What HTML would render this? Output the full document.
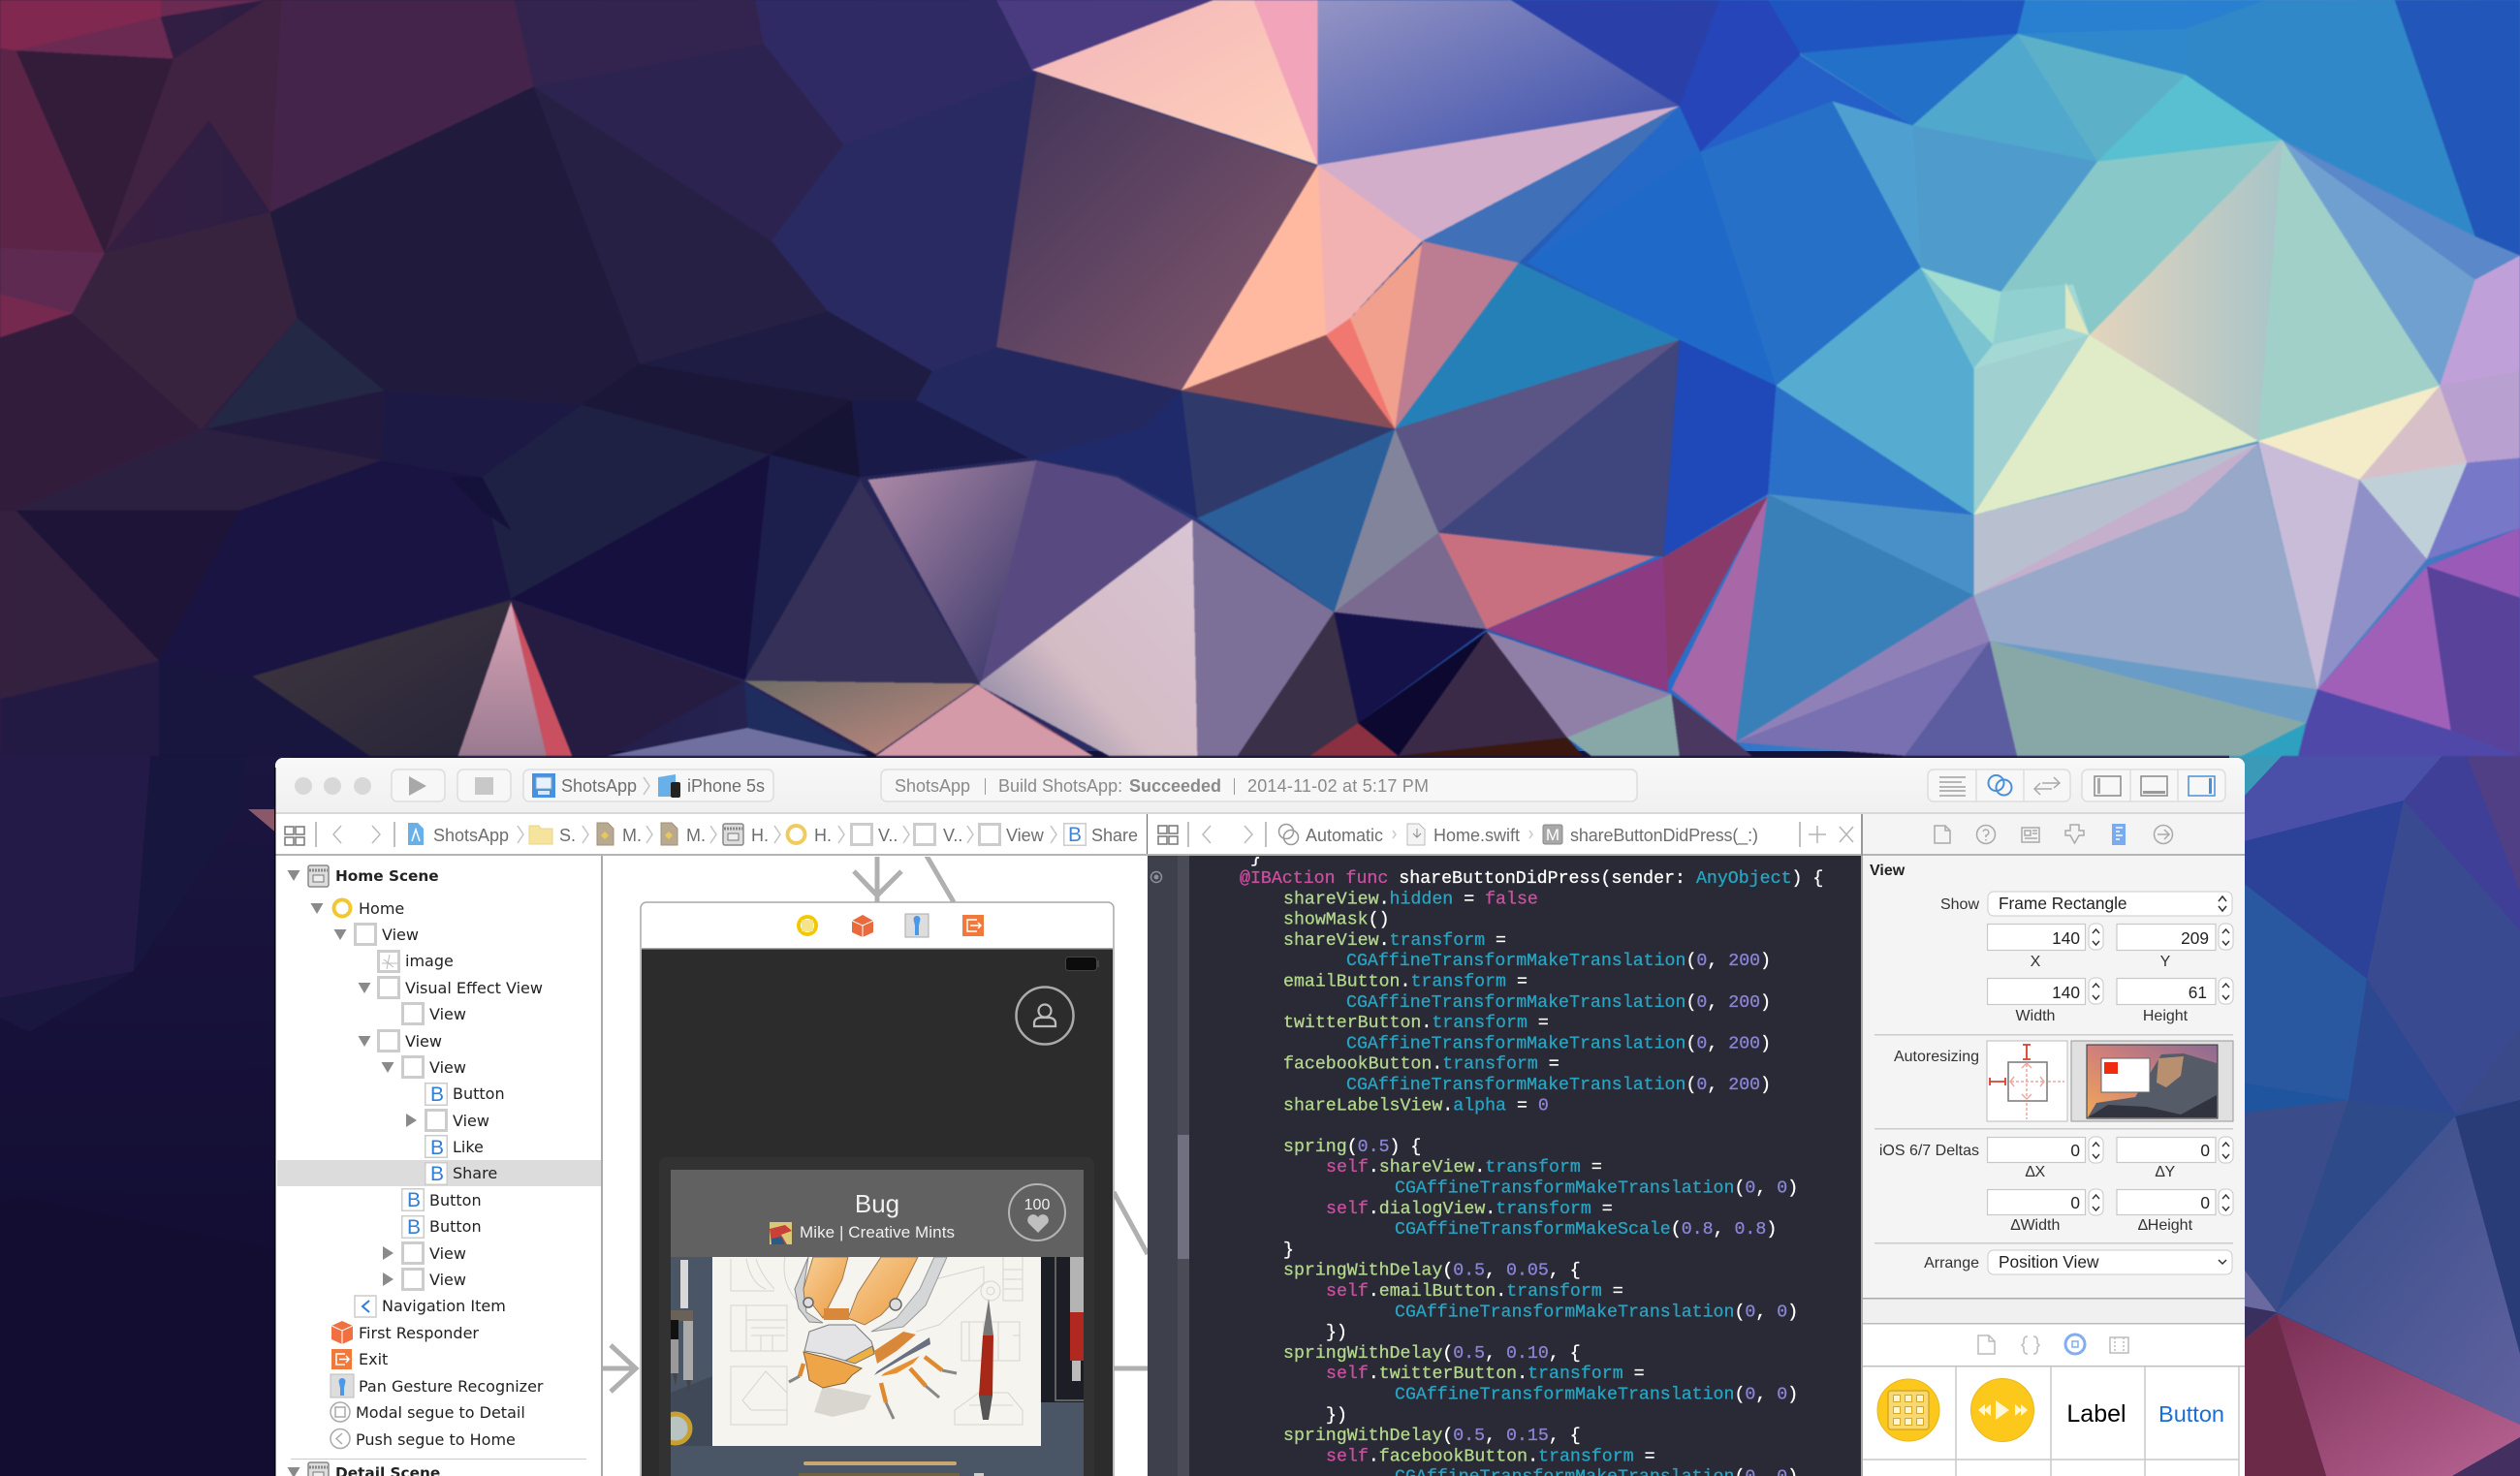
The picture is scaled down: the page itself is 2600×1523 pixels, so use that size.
<!DOCTYPE html>
<html><head><meta charset="utf-8"><title>Xcode ShotsApp</title>
<style>
html,body{margin:0;padding:0;width:2600px;height:1523px;overflow:hidden;background:#15123a}
svg{display:block}
text{font-family:"Liberation Sans",sans-serif;white-space:pre}
.o{font-family:"DejaVu Sans",sans-serif;font-size:16px;fill:#222}
.ob{font-family:"DejaVu Sans",sans-serif;font-size:15.3px;font-weight:bold;fill:#222}
.tb{font-size:18px;fill:#6e6e6e}
.ac{font-size:18px;fill:#8a8a8a}
.i{font-size:16px;fill:#333}
.f{font-size:17.3px;fill:#222}
.r{text-anchor:end}.c{text-anchor:middle}
.code text{font-family:"Liberation Mono",monospace;font-size:18.25px;fill:#fff;stroke:#fff;stroke-width:.3px}
.g{fill:#b2d68c;stroke:#b2d68c}.t{fill:#27a4c2;stroke:#27a4c2}.p{fill:#c8509f;stroke:#c8509f}.n{fill:#8a84d4;stroke:#8a84d4}
</style></head><body>
<svg xmlns="http://www.w3.org/2000/svg" width="2600" height="1523" viewBox="0 0 2600 1523">
<defs>
<filter id="soft" x="-1%" y="-1%" width="102%" height="102%" color-interpolation-filters="sRGB"><feGaussianBlur stdDeviation="0.8"/></filter>
<linearGradient id="base" x1="0" x2="1" y1="0" y2="0"><stop offset="0" stop-color="#3a1f42"/><stop offset=".2" stop-color="#221c44"/><stop offset=".42" stop-color="#2a2a60"/><stop offset=".65" stop-color="#2468c8"/><stop offset=".85" stop-color="#60a8c8"/><stop offset="1" stop-color="#3a6ac0"/></linearGradient>
<linearGradient id="brown" x1="0" x2="1" y1="0" y2="1"><stop offset="0" stop-color="#3f3358"/><stop offset="1" stop-color="#875a6e"/></linearGradient>
<linearGradient id="blueg" x1="0" x2="1" y1="0" y2="1"><stop offset="0" stop-color="#9494c4"/><stop offset="1" stop-color="#3248a8"/></linearGradient>
<linearGradient id="peach" x1="0" x2="1" y1="0" y2="1"><stop offset="0" stop-color="#f2b6ba"/><stop offset="1" stop-color="#ffd0ba"/></linearGradient>
<linearGradient id="cream" x1="0" x2="1" y1="0" y2="0"><stop offset="0" stop-color="#e4d4bc"/><stop offset="1" stop-color="#a8c4c8"/></linearGradient>
<linearGradient id="lav" x1="0" x2="1" y1="0" y2="1"><stop offset="0" stop-color="#b08ca8"/><stop offset="1" stop-color="#2f3066"/></linearGradient>
<linearGradient id="pw" x1="1" x2="0" y1="0" y2="1"><stop offset="0" stop-color="#d8c4d4"/><stop offset=".6" stop-color="#d4bcc4"/><stop offset="1" stop-color="#7a7a9c"/></linearGradient>
<linearGradient id="pinkr" x1="0" x2="1" y1="0" y2="1"><stop offset="0" stop-color="#7a2f55"/><stop offset="1" stop-color="#b86494"/></linearGradient>
<linearGradient id="rightb" x1="0" x2="1" y1="0" y2="1"><stop offset="0" stop-color="#2f4a88"/><stop offset="1" stop-color="#60629e"/></linearGradient>
<linearGradient id="lnavy" x1="0" x2="0" y1="0" y2="1"><stop offset="0" stop-color="#1b1640"/><stop offset="1" stop-color="#100a2e"/></linearGradient>
<linearGradient id="tbar" x1="0" x2="0" y1="0" y2="1"><stop offset="0" stop-color="#f8f8f8"/><stop offset="1" stop-color="#f0f0f0"/></linearGradient>
<linearGradient id="sky" x1="0" x2="1" y1="1" y2="0"><stop offset="0" stop-color="#f0a858"/><stop offset=".5" stop-color="#d0807a"/><stop offset="1" stop-color="#8a6a94"/></linearGradient>
<linearGradient id="thigh" x1="0" x2="1" y1="0" y2="1"><stop offset="0" stop-color="#f8d098"/><stop offset="1" stop-color="#ea9a40"/></linearGradient>
<linearGradient id="pk" x1="0" x2="0" y1="0" y2="1"><stop offset="0" stop-color="#d8a4b6"/><stop offset="1" stop-color="#9a7a90"/></linearGradient>
<linearGradient id="gy" x1="0" x2="1" y1="0" y2="1"><stop offset="0" stop-color="#40363f"/><stop offset="1" stop-color="#262438"/></linearGradient>
<linearGradient id="tan" x1="0" x2="1" y1="0" y2="1"><stop offset="0" stop-color="#6e6c66"/><stop offset="1" stop-color="#c48a80"/></linearGradient>
<clipPath id="win"><path d="M284 1523V790a8 8 0 0 1 8-8H2308a8 8 0 0 1 8 8V1523Z"/></clipPath>
<clipPath id="ed"><rect x="1184" y="884" width="738" height="639"/></clipPath>
<clipPath id="cv"><rect x="622" y="884" width="562" height="639"/></clipPath>
<clipPath id="img"><rect x="692" y="1297" width="426" height="226"/></clipPath>
<g id="box"><rect x="1.5" y="1.5" width="21" height="21" fill="#fff" stroke="#ccc" stroke-width="3"/></g>
<g id="bb"><rect x=".75" y=".75" width="22.5" height="22.5" fill="#fff" stroke="#ccc" stroke-width="1.5"/></g>
<path id="td" d="M-6.5-5H6.5L0 6Z" fill="#8a8a8a"/>
<path id="tr" d="M-5-7L6 0L-5 7Z" fill="#8a8a8a"/>
<path id="ch" d="M0-9L6 0L0 9" fill="none" stroke="#c4c4c4" stroke-width="1.5"/>
<g id="grid" fill="none" stroke="#777" stroke-width="1.5"><rect x="0" y="0" width="9" height="8"/><rect x="11" y="0" width="9" height="8"/><rect x="0" y="11" width="9" height="8"/><rect x="11" y="11" width="9" height="8"/></g>
<g id="dm"><path d="M0 0H11L17 6V23H0Z" fill="#b8aa90" stroke="#a09078"/><path d="M8 9L12 13L8 17L4 13Z" fill="#e8c858"/></g>
<g id="sb"><rect x="0" y="0" width="21" height="22" rx="2" fill="#ddd" stroke="#888" stroke-width="1.5"/><path d="M1 5H20" stroke="#888" stroke-width="3" stroke-dasharray="2 1"/><rect x="5" y="10" width="11" height="7" fill="#eee" stroke="#777"/></g>
<g id="sp" fill="#fff" stroke="#c8c8c8" stroke-width="1"><rect x="0" y="0" width="15" height="27" rx="6"/><path d="M4 10L7.5 6L11 10M4 18L7.5 22L11 18" fill="none" stroke="#333" stroke-width="1.4"/></g>
</defs>

<!-- WALLPAPER LOWER LEFT -->
<rect x="0" y="760" width="300" height="763" fill="url(#lnavy)"/>
<polygon points="0,760 157,760 138,1002 0,1030" fill="#241a48"/>
<polygon points="157,760 255,760 250,835 138,1002" fill="#17163f"/>
<polygon points="0,1030 138,1002 30,1065 0,1050" fill="#19173f"/>
<polygon points="0,1240 20,1235 284,1290 284,1523 0,1523" fill="#130d31"/>
<polygon points="256,835 300,835 300,872" fill="#8a5868"/>

<!-- WALLPAPER LOWER RIGHT -->
<rect x="2300" y="760" width="300" height="763" fill="#2f4a90"/>
<polygon points="2300,838 2373,760 2300,760" fill="#3a9ab8"/>
<polygon points="2300,872 2480,826 2537,760 2373,760 2300,838" fill="#4a4fa8"/>
<polygon points="2537,760 2600,920 2600,760" fill="#503f85"/>
<polygon points="2480,826 2537,760 2600,920 2600,965" fill="#3f3f98"/>
<polygon points="2300,872 2480,826 2442,1010 2300,900" fill="#2c4298"/>
<polygon points="2480,826 2600,960 2600,1060 2533,1149 2442,1010" fill="#3a4a90"/>
<polygon points="2442,1010 2533,1149 2423,1135" fill="#2c4890"/>
<polygon points="2300,900 2442,1010 2423,1135 2300,1150" fill="#2a58a0"/>
<polygon points="2300,1115 2423,1135 2300,1150" fill="#1f559f"/>
<polygon points="2300,1150 2423,1135 2349,1354 2300,1290" fill="#3a4c8a"/>
<polygon points="2423,1135 2533,1149 2349,1354" fill="#2e4a88"/>
<polygon points="2533,1152 2600,1135 2600,1397" fill="#2a3c78"/>
<polygon points="2533,1152 2600,1397 2600,1470 2349,1354" fill="url(#rightb)"/>
<polygon points="2533,1149 2600,1060 2600,1135" fill="#3a4a88"/>
<polygon points="2300,1290 2349,1354 2300,1345" fill="#6a6aa0"/>
<polygon points="2300,1345 2349,1354 2300,1395" fill="#3a3060"/>
<polygon points="2349,1355 2600,1470 2600,1483 2530,1523 2400,1523" fill="url(#pinkr)"/>
<polygon points="2349,1355 2400,1523 2300,1523 2300,1395" fill="#6a2a48"/>
<polygon points="2600,1483 2530,1523 2600,1523" fill="#443060"/>

<!-- WALLPAPER TOP -->
<rect width="2600" height="775" fill="url(#base)"/>
<g filter="url(#soft)"><g transform="scale(1.6582 .4974)" shape-rendering="crispEdges">
<polygon points="0,0 165,0 100,35 108,122 10,105 0,100" fill="#6a2a52"/>
<polygon points="0,0 100,0 100,35 10,105 0,100" fill="#80284f"/>
<polygon points="0,100 10,105 65,525 0,515" fill="#5c2548"/>
<polygon points="10,105 108,122 130,250 65,525" fill="#321c3a"/>
<polygon points="108,122 165,0 175,0 168,440 130,250 65,525" fill="#402242"/>
<polygon points="175,0 320,0 332,180 168,440" fill="#44244a"/>
<polygon points="320,0 470,0 475,90 332,180" fill="#33244f"/>
<polygon points="0,515 65,525 45,650 0,700" fill="#5e2a52"/>
<polygon points="0,610 45,650 0,700" fill="#76294f"/>
<polygon points="65,525 168,440 185,660 125,890 45,650" fill="#38233f"/>
<polygon points="0,700 45,650 125,890 10,1059 0,1060" fill="#321c3c"/>
<polygon points="168,440 332,180 398,755 362,840 239,810 185,660" fill="#201a3c"/>
<polygon points="332,180 475,90 525,300 480,500" fill="#2c2350"/>
<polygon points="332,180 480,500 515,645 398,755" fill="#272045"/>
<polygon points="185,660 239,810 128,890" fill="#232844"/>
<polygon points="128,890 239,810 237,955" fill="#221a3e"/>
<polygon points="239,810 362,840 300,990 237,955" fill="#1c1a45"/>
<polygon points="362,840 398,755 530,830 479,943" fill="#1a1738"/>
<polygon points="362,840 479,943 318,1242 300,990" fill="#1e2044"/>
<polygon points="479,943 464,1411 318,1242" fill="#15103e"/>
<polygon points="479,943 535,990 464,1411" fill="#1c1e4c"/>
<polygon points="10,1059 128,890 237,955 149,1059" fill="#2c2040"/>
<polygon points="237,955 300,990 318,1242 157,1403 99,1371 149,1059" fill="#191442"/>
<polygon points="280,990 300,990 318,1100 300,1060" fill="#14113a"/>
<polygon points="0,1060 10,1059 99,1371 0,1450" fill="#34203f"/>
<polygon points="10,1059 149,1059 99,1371" fill="#1e1438"/>
<polygon points="0,1450 99,1371 99,1568 0,1568" fill="#231a44"/>
<polygon points="99,1371 157,1403 230,1568 99,1568" fill="#18153f"/>
<polygon points="318,1245 157,1403 230,1568 285,1568" fill="url(#gy)"/>
<polygon points="318,1248 285,1568 345,1568" fill="url(#pk)"/>
<polygon points="318,1250 356,1568 340,1568" fill="#c85060"/>
<polygon points="318,1245 462,1415 378,1568 356,1568" fill="#261c42"/>
<polygon points="470,0 620,0 645,150 525,300 475,90" fill="#2f2a63"/>
<polygon points="620,0 755,0 642,145" fill="#4a3a80"/>
<polygon points="525,300 645,150 620,720 580,770 515,645 480,500" fill="#2a2a62"/>
<polygon points="645,150 820,345 735,810 620,720" fill="url(#brown)"/>
<polygon points="620,720 735,810 710,890 695,985 640,950 570,830 580,770" fill="#23285f"/>
<polygon points="515,645 580,770 570,830 530,830 398,755" fill="#1e1c42"/>
<polygon points="530,830 570,830 640,950 535,990" fill="#1a1a48"/>
<polygon points="479,943 530,830 535,990" fill="#161434"/>
<polygon points="640,950 695,985 745,1075 735,810 710,890" fill="#1f2a6a"/>
<polygon points="735,810 868,890 745,1075" fill="#2f3a6a"/>
<polygon points="642,145 755,0 780,0 820,342" fill="url(#peach)"/>
<polygon points="780,0 820,0 820,342" fill="#f2a4ba"/>
<polygon points="820,0 940,0 1045,220 820,342" fill="url(#blueg)"/>
<polygon points="940,0 1070,0 1058,315 1045,220" fill="#2a40a8"/>
<polygon points="820,342 1045,220 885,500" fill="#d2aecb"/>
<polygon points="820,342 885,500 840,660 825,695" fill="#f2b2b2"/>
<polygon points="820,342 825,695 735,810" fill="#feb9a0"/>
<polygon points="825,695 735,810 868,890" fill="#884e58"/>
<polygon points="825,695 840,660 885,505 868,890" fill="#f0a08c"/>
<polygon points="825,695 840,660 868,890" fill="#f07870"/>
<polygon points="885,500 945,545 868,890" fill="#bc7c92"/>
<polygon points="945,545 1045,705 868,890" fill="#2680b8"/>
<polygon points="885,500 1045,220 945,545" fill="#4070b8"/>
<polygon points="868,890 1045,705 895,1105" fill="#5a5585"/>
<polygon points="1045,705 1035,1155 895,1105" fill="#3f457d"/>
<polygon points="868,890 895,1105 830,1270" fill="#82849c"/>
<polygon points="868,890 745,1075 830,1270" fill="#2a5f9a"/>
<polygon points="895,1105 1030,1155 925,1305" fill="#c87080"/>
<polygon points="830,1270 895,1105 925,1305" fill="#7a6a90"/>
<polygon points="1045,220 1058,315 950,545" fill="#2468c8"/>
<polygon points="950,545 1058,315 1105,800 1045,705" fill="#1f6ac8"/>
<polygon points="1070,0 1120,0 1120,115 1058,315 1045,220" fill="#2545b8"/>
<polygon points="1100,0 1260,0 1255,70 1120,110" fill="#1f55c0"/>
<polygon points="1120,110 1255,70 1190,260" fill="#2270c8"/>
<polygon points="1120,115 1190,260 1140,210 1058,315" fill="#2460c8"/>
<polygon points="1058,315 1140,210 1195,470 1195,555 1105,800" fill="#2670c8"/>
<polygon points="1140,210 1190,260 1195,555" fill="#4fa0d0"/>
<polygon points="1195,555 1105,800 1228,1068 1228,760" fill="#55acd0"/>
<polygon points="1105,800 1228,1068 1100,1025" fill="#2a6fc8"/>
<polygon points="1045,705 1105,800 1100,1025 1035,1155" fill="#1f48b8"/>
<polygon points="1255,70 1190,260 1305,335" fill="#50a8cc"/>
<polygon points="1255,70 1360,155 1305,335" fill="#5cb0c8"/>
<polygon points="1255,70 1360,60 1360,155" fill="#2f88cc"/>
<polygon points="1260,0 1410,0 1360,60 1255,70" fill="#2a80d0"/>
<polygon points="1360,60 1410,0 1490,0 1540,490 1420,290 1360,155" fill="#3088c8"/>
<polygon points="1490,0 1568,0 1568,530 1540,490" fill="#2256b8"/>
<polygon points="1360,155 1420,290 1305,335" fill="#58c0d0"/>
<polygon points="1190,260 1305,335 1245,605 1195,555" fill="#4f9ccc"/>
<polygon points="1305,335 1420,290 1300,695 1290,590 1245,605" fill="#88c8c8"/>
<polygon points="1420,290 1300,695 1405,915" fill="url(#cream)"/>
<polygon points="1420,290 1405,915 1518,800" fill="#a0d0c8"/>
<polygon points="1420,290 1540,580 1518,800" fill="#70a0d0"/>
<polygon points="1540,490 1420,290 1540,580 1568,530" fill="#5a88c8"/>
<polygon points="1245,605 1290,590 1300,695 1228,765 1240,715" fill="#a4d8d4"/>
<polygon points="1195,555 1245,605 1240,715" fill="#a0dcd0"/>
<polygon points="1245,605 1285,590 1285,680 1240,715" fill="#90d0d0"/>
<polygon points="1285,585 1300,695 1285,680" fill="#e0e8c0"/>
<polygon points="1195,555 1240,715 1228,765" fill="#7cc4d0"/>
<polygon points="1228,765 1300,695 1228,1068" fill="#a0d0d0"/>
<polygon points="1300,695 1405,915 1228,1068" fill="#e0ecc8"/>
<polygon points="1405,915 1518,800 1468,995" fill="#f4ecc8"/>
<polygon points="1518,800 1535,960 1468,995" fill="#d8c0c8"/>
<polygon points="1518,800 1568,770 1568,950 1535,960" fill="#b8a0d0"/>
<polygon points="1540,580 1568,530 1568,770 1518,800" fill="#c0a0d8"/>
<polygon points="1405,920 1228,1068 1228,1235 1360,1060" fill="#b8c0d0"/>
<polygon points="1405,920 1228,1235 1238,1330 1442,1430" fill="#98a8c8"/>
<polygon points="1405,920 1360,1060 1228,1235" fill="#c4b0cc"/>
<polygon points="1405,915 1468,995 1442,1430" fill="#c8bcd8"/>
<polygon points="1468,995 1535,960 1510,1160" fill="#c0d0d8"/>
<polygon points="1468,995 1510,1160 1442,1430" fill="#9090c8"/>
<polygon points="1535,960 1568,950 1568,1095 1510,1160" fill="#7878c8"/>
<polygon points="1568,1095 1510,1175 1568,1240" fill="#9a5ab8"/>
<polygon points="1510,1175 1568,1240 1568,1568 1525,1515" fill="#58429a"/>
<polygon points="1510,1175 1525,1515 1442,1430" fill="#a060b8"/>
<polygon points="1238,1330 1442,1430 1435,1500" fill="#6a9cc8"/>
<polygon points="1238,1330 1435,1500 1395,1568 1255,1568" fill="#88a8a8"/>
<polygon points="1238,1330 1255,1568 1185,1568" fill="#5c5ca0"/>
<polygon points="1238,1330 1185,1568 1080,1540" fill="#7870b0"/>
<polygon points="1228,1235 1238,1330 1080,1540" fill="#9080b8"/>
<polygon points="1228,1068 1100,1025 1228,1235" fill="#4a90c8"/>
<polygon points="1100,1025 1228,1235 1080,1540" fill="#3a80b8"/>
<polygon points="1100,1025 1040,1430 1080,1540" fill="#a868a8"/>
<polygon points="1100,1030 1035,1155 1035,1430" fill="#8a3a68"/>
<polygon points="925,1305 1035,1155 1038,1435" fill="#8c3a82"/>
<polygon points="1040,1440 1080,1540 1090,1568 1045,1568" fill="#4a3860"/>
<polygon points="925,1310 1040,1440 975,1530" fill="#9080a8"/>
<polygon points="1040,1440 975,1530 990,1568 1045,1568" fill="#88a8a8"/>
<polygon points="1435,1500 1395,1568 1430,1568" fill="#2ea0c0"/>
<polygon points="1442,1430 1525,1515 1568,1568 1430,1568 1435,1500" fill="#5048a8"/>
<polygon points="540,995 645,955 610,1420" fill="url(#lav)"/>
<polygon points="645,955 695,990 742,1078 610,1420" fill="#584a80"/>
<polygon points="742,1078 608,1420 690,1568 745,1568" fill="url(#pw)"/>
<polygon points="742,1078 830,1270 770,1568 745,1568" fill="#7d7098"/>
<polygon points="830,1270 925,1305 845,1500" fill="#15124a"/>
<polygon points="830,1270 845,1500 815,1568 770,1568" fill="#3a3048"/>
<polygon points="925,1310 975,1530 870,1568" fill="#3a2a48"/>
<polygon points="925,1310 845,1500 870,1568" fill="#0c0830"/>
<polygon points="845,1500 815,1568 870,1568" fill="#8a3040"/>
<polygon points="870,1568 975,1530 985,1568" fill="#3a1810"/>
<polygon points="535,995 610,1420 463,1412" fill="#343058"/>
<polygon points="463,1412 608,1418 545,1565" fill="url(#tan)"/>
<polygon points="608,1420 545,1568 680,1568" fill="#d49aa8"/>
<polygon points="610,1425 680,1568 650,1510" fill="#a85868"/>
<polygon points="463,1415 540,1568 465,1510" fill="#1f2c5e"/>
<polygon points="465,1510 378,1568 540,1568" fill="#7070a0"/>
</g></g>

<!-- WINDOW -->
<g clip-path="url(#win)">
<rect x="284" y="782" width="2032" height="741" fill="#f4f4f4"/>
<rect x="284" y="782" width="2032" height="56" fill="url(#tbar)"/>
<rect x="284" y="838" width="2032" height="2" fill="#d8d8d8"/>
<rect x="284" y="840" width="1638" height="41" fill="#fff"/>
<rect x="284" y="881" width="2032" height="2" fill="#b4b4b4"/>
<rect x="284" y="883" width="338" height="640" fill="#fff"/>

<!-- traffic lights -->
<circle cx="313" cy="811" r="9" fill="#d8d8d8"/><circle cx="343" cy="811" r="9" fill="#d8d8d8"/><circle cx="374" cy="811" r="9" fill="#d8d8d8"/>
<g fill="#f7f7f7" stroke="#ddd" stroke-width="1.5">
<rect x="404" y="794" width="55" height="33" rx="6"/><rect x="472" y="794" width="55" height="33" rx="6"/><rect x="540" y="794" width="258" height="33" rx="6"/><rect x="909" y="794" width="780" height="33" rx="6"/>
<rect x="1989" y="794" width="147" height="33" rx="6"/><rect x="2148" y="794" width="148" height="33" rx="6"/>
</g>
<path d="M2039 794V827M2088 794V827M2198 794V827M2247 794V827" stroke="#ddd" stroke-width="1.5"/>
<path d="M422 801L440 811L422 821Z" fill="#a8a8a8"/>
<rect x="490" y="802" width="19" height="18" fill="#c8c8c8"/>
<rect x="549" y="798" width="24" height="25" fill="#4a90e0"/><rect x="553" y="802" width="16" height="12" fill="#e8f2fc" stroke="#7ab"/><rect x="555" y="816" width="12" height="4" fill="#d8e8f8"/>
<text class="tb" x="579" y="817">ShotsApp</text>
<use href="#ch" x="664" y="811"/>
<path d="M679 802L697 799V822H679Z" fill="#6ab0e8"/><rect x="692" y="807" width="10" height="16" rx="2" fill="#222"/>
<text class="tb" x="709" y="817">iPhone 5s</text>

<text class="ac" x="923" y="817">ShotsApp</text><rect x="1016" y="803" width="1" height="17" fill="#999"/>
<text class="ac" x="1030" y="817">Build ShotsApp:</text><text class="ac" x="1165" y="817" style="font-weight:bold">Succeeded</text><rect x="1273" y="803" width="1" height="17" fill="#999"/>
<text class="ac" x="1287" y="817" textLength="187">2014-11-02 at 5:17 PM</text>

<!-- right toolbar icons -->
<path d="M2001 802H2028M2001 807H2024M2001 812H2028M2001 816H2028M2001 821H2028" stroke="#a0a0a0" stroke-width="1.5"/>
<circle cx="2059.5" cy="808" r="8" fill="none" stroke="#4a90d9" stroke-width="2"/><circle cx="2067.5" cy="812.5" r="8" fill="none" stroke="#4a90d9" stroke-width="2"/>
<path d="M2107 808H2125M2119 802L2125 808L2119 813M2117 814H2099M2105 808L2099 814L2105 820" fill="none" stroke="#aaa" stroke-width="1.5"/>
<rect x="2161" y="801" width="27" height="20" fill="none" stroke="#888" stroke-width="1.5"/><rect x="2164" y="803" width="3" height="16" fill="#aaa"/>
<rect x="2209" y="801" width="27" height="20" fill="none" stroke="#888" stroke-width="1.5"/><rect x="2211" y="816" width="23" height="3" fill="#999"/>
<rect x="2258" y="801" width="27" height="20" fill="none" stroke="#4a90d9" stroke-width="1.5"/><rect x="2279" y="803" width="3" height="16" fill="#4a90d9"/>

<!-- jump bar left -->
<use href="#grid" x="294" y="853"/>
<path d="M326 848V874M407 848V874M1226 848V874M1306 848V874M1857 848V874" stroke="#aaa" stroke-width="1.5"/>
<path d="M352 852L344 861L352 870M384 852L392 861L384 870M1249 852L1241 861L1249 870M1284 852L1292 861L1284 870" fill="none" stroke="#bbb" stroke-width="1.5"/>
<path d="M421 849H431L437 855V872H421Z" fill="#6ab0e8"/><path d="M425 868L429 856L433 868" fill="none" stroke="#fff" stroke-width="1.5"/>
<text class="tb" x="447" y="868">ShotsApp</text><use href="#ch" x="534" y="861"/>
<path d="M546 852H556L558 855H570V871H546Z" fill="#f6e49e" stroke="#e8d488"/>
<text class="tb" x="577" y="868">S.</text><use href="#ch" x="601" y="861"/>
<use href="#dm" x="616" y="849"/><text class="tb" x="642" y="868">M.</text><use href="#ch" x="667" y="861"/>
<use href="#dm" x="682" y="849"/><text class="tb" x="708" y="868">M.</text><use href="#ch" x="733" y="861"/>
<use href="#sb" x="746" y="850"/><text class="tb" x="775" y="868">H.</text><use href="#ch" x="799" y="861"/>
<ellipse cx="821.5" cy="861" rx="9" ry="9" fill="#fff" stroke="#f0cc60" stroke-width="4"/><text class="tb" x="840" y="868">H.</text><use href="#ch" x="865" y="861"/>
<use href="#box" x="877" y="849"/><text class="tb" x="906" y="868">V..</text><use href="#ch" x="932" y="861"/>
<use href="#box" x="942" y="849"/><text class="tb" x="973" y="868">V..</text><use href="#ch" x="998" y="861"/>
<use href="#box" x="1009" y="849"/><text class="tb" x="1038" y="868">View</text><use href="#ch" x="1084" y="861"/>
<use href="#bb" x="1097" y="849"/><text x="1102" y="868" style="font-size:21px;fill:#3f86d8">B</text><text class="tb" x="1126" y="868">Share</text>
<rect x="1183" y="840" width="1" height="41" fill="#666"/>

<!-- jump bar right -->
<use href="#grid" x="1195" y="852"/>
<circle cx="1327" cy="858" r="7.5" fill="none" stroke="#999" stroke-width="1.5"/><circle cx="1332" cy="864" r="7.5" fill="none" stroke="#999" stroke-width="1.5"/>
<text class="tb" x="1347" y="868">Automatic</text><path d="M1437 857L1440 861L1437 865" fill="none" stroke="#ccc" stroke-width="1.5"/>
<path d="M1452 850H1464L1470 856V872H1452Z" fill="#f4f4f4" stroke="#bbb"/><path d="M1458 860L1462 864L1466 860M1462 855V864" fill="none" stroke="#888"/>
<text class="tb" x="1479" y="868">Home.swift</text><path d="M1578 857L1581 861L1578 865" fill="none" stroke="#ccc" stroke-width="1.5"/>
<rect x="1592" y="851" width="20" height="20" rx="2" fill="#a8a8a8" stroke="#888"/><text x="1602" y="867" text-anchor="middle" style="font-size:17px;fill:#fff">M</text>
<text class="tb" x="1620" y="868" textLength="194">shareButtonDidPress(_:)</text>
<path d="M1866 861H1884M1875 852V870M1898 853L1912 869M1912 853L1898 869" stroke="#b4b4b4" stroke-width="1.5" fill="none"/>
<rect x="1920" y="840" width="2" height="683" fill="#999"/>

<!-- inspector tabs -->
<g fill="none" stroke="#aaa" stroke-width="1.5">
<path d="M1996 852H2007L2012 857V870H1996ZM2007 852V857H2012"/>
<circle cx="2049" cy="861" r="9.5"/><path d="M2046 858A3 3 0 1 1 2049 862V864M2049 866V867.5"/>
<rect x="2086" y="854" width="18" height="15"/><rect x="2089" y="857" width="6" height="5"/><path d="M2097 857H2102M2097 860H2102M2089 865H2102"/>
<path d="M2136 851H2145V857H2150V862H2145L2140.5 870L2136 862H2131V857H2136Z"/>
<circle cx="2232" cy="861" r="9.5"/><path d="M2226 861H2238M2233 856L2238 861L2233 866"/>
</g>
<rect x="2179" y="850" width="14" height="22" fill="#7aabf0"/><path d="M2183 854H2190M2183 858H2187M2183 862H2190M2183 866H2187" stroke="#fff" stroke-width="1.5"/>

<!-- OUTLINE -->
<rect x="286" y="1197" width="335" height="27" fill="#dcdcdc"/>
<rect x="620" y="883" width="2" height="640" fill="#aaa"/>
<use href="#td" x="303" y="903"/>
<use href="#sb" x="318" y="893"/>
<text class="ob" x="346" y="909">Home Scene</text>

<use href="#td" x="327" y="937"/><circle cx="353" cy="937" r="8.5" fill="#fff" stroke="#f2c832" stroke-width="4"/><text class="o" x="370" y="943">Home</text>
<use href="#td" x="351" y="964"/><use href="#box" x="365" y="952"/><text class="o" x="394" y="970">View</text>
<use href="#box" x="389" y="980"/><path d="M396 990L406 998M402 985L399 1000M394 994H410" stroke="#bbb"/><text class="o" x="418" y="997">image</text>
<use href="#td" x="376" y="1019"/><use href="#box" x="389" y="1007"/><text class="o" x="418" y="1025">Visual Effect View</text>
<use href="#box" x="414" y="1034"/><text class="o" x="443" y="1052">View</text>
<use href="#td" x="376" y="1074"/><use href="#box" x="389" y="1062"/><text class="o" x="418" y="1080">View</text>
<use href="#td" x="400" y="1101"/><use href="#box" x="414" y="1089"/><text class="o" x="443" y="1107">View</text>
<use href="#bb" x="438" y="1117"/><text x="444" y="1136" style="font-size:21px;fill:#2f7ed8">B</text><text class="o" x="467" y="1134">Button</text>
<use href="#tr" x="424" y="1156"/><use href="#box" x="438" y="1144"/><text class="o" x="467" y="1162">View</text>
<use href="#bb" x="438" y="1171"/><text x="444" y="1191" style="font-size:21px;fill:#2f7ed8">B</text><text class="o" x="467" y="1189">Like</text>
<use href="#bb" x="438" y="1199"/><text x="444" y="1218" style="font-size:21px;fill:#2f7ed8">B</text><text class="o" x="467" y="1216">Share</text>
<use href="#bb" x="414" y="1226"/><text x="420" y="1245" style="font-size:21px;fill:#2f7ed8">B</text><text class="o" x="443" y="1244">Button</text>
<use href="#bb" x="414" y="1254"/><text x="420" y="1273" style="font-size:21px;fill:#2f7ed8">B</text><text class="o" x="443" y="1271">Button</text>
<use href="#tr" x="400" y="1293"/><use href="#box" x="414" y="1281"/><text class="o" x="443" y="1299">View</text>
<use href="#tr" x="400" y="1320"/><use href="#box" x="414" y="1308"/><text class="o" x="443" y="1326">View</text>
<rect x="366" y="1337" width="22" height="22" fill="#fff" stroke="#ccc" stroke-width="1.5"/><path d="M381 1342L374 1348L381 1354" fill="none" stroke="#2f7ed8" stroke-width="2"/><text class="o" x="394" y="1353">Navigation Item</text>
<path d="M342 1368L353 1363L364 1368V1382L353 1387L342 1382Z" fill="#ef7040"/><path d="M342 1368L353 1373L364 1368M353 1373V1387" stroke="#fff" fill="none"/><text class="o" x="370" y="1381">First Responder</text>
<rect x="342" y="1392" width="21" height="21" fill="#f07a3c"/><path d="M356 1397H347V1408H356M350 1402.5H360M357 1399L360 1402.5L357 1406" fill="none" stroke="#fff" stroke-width="1.5"/><text class="o" x="370" y="1408">Exit</text>
<rect x="341" y="1418" width="24" height="24" fill="#ddd" stroke="#bbb"/><path d="M353 1422a3.5 3.5 0 0 1 3.5 3.5L355 1432V1440H351V1432L349.5 1425.5A3.5 3.5 0 0 1 353 1422Z" fill="#4a98e8"/><text class="o" x="370" y="1436">Pan Gesture Recognizer</text>
<circle cx="351" cy="1457" r="10" fill="#fff" stroke="#aaa" stroke-width="1.5"/><rect x="346" y="1452" width="10" height="10" fill="none" stroke="#aaa" stroke-width="1.5"/><text class="o" x="367" y="1463">Modal segue to Detail</text>
<circle cx="351" cy="1484.5" r="10" fill="#fff" stroke="#aaa" stroke-width="1.5"/><path d="M353 1479L347 1484.5L353 1490" fill="none" stroke="#aaa" stroke-width="1.5"/><text class="o" x="367" y="1491">Push segue to Home</text>
<rect x="300" y="1505" width="305" height="1" fill="#ccc"/>
<use href="#td" x="303" y="1519"/><use href="#sb" x="318" y="1509"/><text class="ob" x="346" y="1525">Detail Scene</text>

<!-- CANVAS -->
<rect x="622" y="883" width="562" height="640" fill="#fff"/>
<g clip-path="url(#cv)" fill="none" stroke="#b0b0b0" stroke-width="5">
<path d="M905 883V931M881 899L905 924L930 899M956 883L984 931M622 1412H654M630 1388L656 1412L630 1436M1149 1412H1184M1149 1230L1184 1294"/>
</g>
<path d="M661 979V937a6 6 0 0 1 6-6H1143a6 6 0 0 1 6 6V1523H661Z" fill="#fff" stroke="#a8a8a8" stroke-width="1.5"/>
<rect x="662" y="979" width="486" height="544" fill="#2c2c2c"/>
<rect x="662" y="978" width="486" height="1.5" fill="#aaa"/>
<circle cx="833" cy="955" r="9" fill="#fff" stroke="#f4c800" stroke-width="4"/><rect x="827" y="949" width="12" height="12" fill="#f4e48c"/>
<path d="M879 950L890 944L901 950V962L890 967L879 962Z" fill="#e96a3c"/><path d="M879 950L890 955L901 950M890 955V967" stroke="#fff" fill="none"/>
<rect x="934" y="943" width="24" height="24" fill="#ddd" stroke="#aaa"/><path d="M946 945a3.5 3.5 0 0 1 3.5 3.5L948 955V965H944V955L942.5 948.5A3.5 3.5 0 0 1 946 945Z" fill="#4a98e8"/>
<rect x="993" y="944" width="22" height="22" fill="#f07a3c"/><path d="M1008 949H998V961H1008M1001 955H1012M1009 952L1012 955L1009 958" fill="none" stroke="#fff" stroke-width="1.5"/>
<rect x="1099.5" y="987.5" width="32" height="14" rx="3" fill="#0c0c0c" stroke="#444"/><rect x="1132" y="991" width="2" height="7" fill="#444"/>
<circle cx="1078" cy="1048" r="29.5" fill="none" stroke="#aaa" stroke-width="2.5"/>
<circle cx="1078" cy="1043" r="6.5" fill="none" stroke="#bbb" stroke-width="2.2"/><path d="M1067 1059V1056Q1067 1051 1073 1050H1083Q1089 1051 1089 1056V1059Z" fill="none" stroke="#bbb" stroke-width="2.2"/>
<rect x="680" y="1194" width="449" height="340" rx="8" fill="#323232"/>
<rect x="692" y="1207" width="426" height="90" fill="#616161"/>
<text x="905" y="1251" text-anchor="middle" style="font-size:26px;fill:#f0f0f0">Bug</text>
<rect x="794" y="1261" width="23" height="23" fill="#d8c878"/><path d="M794 1268L810 1264L817 1270L806 1274L812 1284H796Z" fill="#c84038"/><path d="M796 1278L806 1276L810 1284H796Z" fill="#2c5a88"/>
<text x="825" y="1277" textLength="160" style="font-size:17px;fill:#f0f0f0">Mike | Creative Mints</text>
<circle cx="1070" cy="1251" r="29" fill="none" stroke="#b4b4b4" stroke-width="2"/>
<text x="1070" y="1248" text-anchor="middle" style="font-size:16px;fill:#eee">100</text>
<path d="M1071 1272L1061 1262A5.5 5.5 0 0 1 1071 1256A5.5 5.5 0 0 1 1081 1262Z" fill="#bfbfbf"/>

<!-- bug image -->
<g clip-path="url(#img)">
<rect x="692" y="1297" width="426" height="226" fill="#4a5566"/>
<path d="M692 1437L735 1420V1492H692Z" fill="#3f4958"/>
<rect x="735" y="1297" width="339" height="195" fill="#f6f4ee"/>
<rect x="1074" y="1297" width="44" height="150" fill="#1c1e26"/>
<path d="M1089 1297V1445H1118" fill="none" stroke="#777" stroke-width="1.5"/>
<rect x="1104" y="1297" width="14" height="57" fill="#b4b4b4"/><rect x="1104" y="1354" width="14" height="50" fill="#b02820"/><rect x="1106" y="1404" width="9" height="21" fill="#bbb"/>
<rect x="702" y="1300" width="8" height="50" fill="#d8d8d8"/><rect x="705" y="1362" width="10" height="62" fill="#aaa"/><path d="M708 1424H713L711 1435Z" fill="#444"/>
<rect x="692" y="1352" width="23" height="11" fill="#6a6258"/><rect x="692" y="1362" width="8" height="20" fill="#111"/><rect x="692" y="1382" width="8" height="35" fill="#999"/><path d="M694 1417H699L697 1430Z" fill="#444"/>
<circle cx="697" cy="1474" r="15" fill="#b8c4c0" stroke="#c9a030" stroke-width="5"/>
<g fill="none" stroke="#d6d4ce" stroke-width="1">
<path d="M754 1299V1332H799M770 1299Q775 1325 790 1330M780 1299Q785 1315 799 1330"/>
<path d="M754 1347H812V1394H754ZM770 1347V1394M770 1362H812M775 1370H810M775 1378H810M785 1378V1394M797 1378V1394"/>
<path d="M754 1410H812V1470H754ZM766 1445L790 1415L812 1437V1455H775Z"/>
<path d="M992 1364H1052V1404H992ZM1000 1364V1404M1015 1364V1404M1030 1364V1404M1045 1378H1052"/>
<path d="M985 1470V1455L1010 1437H1040L1055 1455V1470ZM1000 1450H1045"/>
<circle cx="1022" cy="1332" r="10"/><circle cx="1022" cy="1332" r="4"/><path d="M1035 1297V1342H1055V1297M1035 1310H1055M1035 1320H1055M1035 1330H1055"/>
<path d="M965 1320L1015 1307L1015 1324L969 1367L945 1374M810 1297Q805 1325 825 1345"/>
</g>
<path d="M840 1457L849 1430L899 1440L892 1454L859 1462Z" fill="#d8d6cf"/>
<path d="M820 1330L834 1297L829 1330L832 1354L849 1365L835 1364L824 1350Z" fill="#d0d2d4" stroke="#8a8a8a"/>
<path d="M899 1374L925 1360L949 1330L964 1297H977L955 1347L932 1369Z" fill="#d4d6d8" stroke="#9a9a9a"/>
<path d="M829 1330L839 1297H875L869 1320L859 1340L849 1360L839 1347L830 1340Z" fill="url(#thigh)" stroke="#a07848"/>
<path d="M875 1360L885 1334L909 1297H947L937 1317L925 1340L909 1357L892 1367Z" fill="url(#thigh)" stroke="#a07848"/>
<path d="M850 1350H876V1362H850Z" fill="#d88838"/><circle cx="834" cy="1344" r="5" fill="#ddd" stroke="#666" stroke-width="1.5"/><circle cx="924" cy="1346" r="6" fill="#ddd" stroke="#666" stroke-width="1.5"/>
<path d="M902 1394L932 1374L945 1377L925 1394L905 1407Z" fill="#d88838"/>
<path d="M912 1417L949 1399L942 1407L925 1417L909 1420Z" fill="#e89030"/>
<path d="M829 1395L849 1400L865 1404L889 1412L879 1419L872 1427L849 1432L835 1424L832 1407Z" fill="#eea548" stroke="#8a6030"/>
<path d="M830 1394L835 1374L855 1367L882 1367L899 1384L902 1394L872 1404L849 1397Z" fill="#e4e4e6" stroke="#777"/>
<path d="M872 1404L900 1389L902 1397L882 1407Z" fill="#eeb040" stroke="#777"/>
<path d="M905 1415L959 1380L960 1387L935 1400L902 1419Z" fill="#6a7080"/>
<path d="M954 1400L972 1414M939 1412L955 1430M909 1427L914 1447M829 1407L825 1420" fill="none" stroke="#e08a30" stroke-width="4.5"/>
<path d="M972 1414L987 1417M955 1430L969 1442M914 1447L922 1464M825 1420L814 1426" fill="none" stroke="#888" stroke-width="3"/>
<path d="M1020 1340L1025 1378H1014Z" fill="#777"/><path d="M1014 1378H1025L1024 1440H1010Z" fill="#a82818"/><path d="M1010 1440H1024L1020 1465H1014Z" fill="#555"/>
<rect x="829" y="1508" width="158" height="4" rx="2" fill="#c8a870"/>
<rect x="824" y="1520" width="166" height="5" fill="#6e6244"/><rect x="1005" y="1520" width="10" height="5" fill="#ccc"/>
</g>

<!-- CODE EDITOR -->
<rect x="1184" y="883" width="736" height="640" fill="#292a35"/>
<rect x="1184" y="883" width="31" height="640" fill="#3e404b"/>
<rect x="1215" y="883" width="12" height="640" fill="#494b57"/>
<rect x="1215" y="1171" width="12" height="128" fill="#6f7180"/>
<circle cx="1193" cy="905" r="5.5" fill="none" stroke="#8e909c" stroke-width="1.5"/><circle cx="1193" cy="905" r="2.5" fill="#8e909c"/>
<g class="code" clip-path="url(#ed)">
<text x="1279" y="889.7"> }</text>
<text x="1279" y="911"><tspan class="p">@IBAction</tspan> <tspan class="p">func</tspan> shareButtonDidPress(sender: <tspan class="t">AnyObject</tspan>) {</text>
<text x="1324" y="932.3"><tspan class="g">shareView</tspan>.<tspan class="t">hidden</tspan> = <tspan class="p">false</tspan></text>
<text x="1324" y="953.6"><tspan class="g">showMask</tspan>()</text>
<text x="1324" y="974.9"><tspan class="g">shareView</tspan>.<tspan class="t">transform</tspan> =</text>
<text x="1389" y="996.2"><tspan class="t">CGAffineTransformMakeTranslation</tspan>(<tspan class="n">0</tspan>, <tspan class="n">200</tspan>)</text>
<text x="1324" y="1017.5"><tspan class="g">emailButton</tspan>.<tspan class="t">transform</tspan> =</text>
<text x="1389" y="1038.8"><tspan class="t">CGAffineTransformMakeTranslation</tspan>(<tspan class="n">0</tspan>, <tspan class="n">200</tspan>)</text>
<text x="1324" y="1060.1"><tspan class="g">twitterButton</tspan>.<tspan class="t">transform</tspan> =</text>
<text x="1389" y="1081.4"><tspan class="t">CGAffineTransformMakeTranslation</tspan>(<tspan class="n">0</tspan>, <tspan class="n">200</tspan>)</text>
<text x="1324" y="1102.7"><tspan class="g">facebookButton</tspan>.<tspan class="t">transform</tspan> =</text>
<text x="1389" y="1124"><tspan class="t">CGAffineTransformMakeTranslation</tspan>(<tspan class="n">0</tspan>, <tspan class="n">200</tspan>)</text>
<text x="1324" y="1145.3"><tspan class="g">shareLabelsView</tspan>.<tspan class="t">alpha</tspan> = <tspan class="n">0</tspan></text>
<text x="1324" y="1187.9"><tspan class="g">spring</tspan>(<tspan class="n">0.5</tspan>) {</text>
<text x="1368" y="1209.2"><tspan class="p">self</tspan>.<tspan class="g">shareView</tspan>.<tspan class="t">transform</tspan> =</text>
<text x="1439" y="1230.5"><tspan class="t">CGAffineTransformMakeTranslation</tspan>(<tspan class="n">0</tspan>, <tspan class="n">0</tspan>)</text>
<text x="1368" y="1251.8"><tspan class="p">self</tspan>.<tspan class="g">dialogView</tspan>.<tspan class="t">transform</tspan> =</text>
<text x="1439" y="1273.1"><tspan class="t">CGAffineTransformMakeScale</tspan>(<tspan class="n">0.8</tspan>, <tspan class="n">0.8</tspan>)</text>
<text x="1324" y="1294.4">}</text>
<text x="1324" y="1315.7"><tspan class="g">springWithDelay</tspan>(<tspan class="n">0.5</tspan>, <tspan class="n">0.05</tspan>, {</text>
<text x="1368" y="1337"><tspan class="p">self</tspan>.<tspan class="g">emailButton</tspan>.<tspan class="t">transform</tspan> =</text>
<text x="1439" y="1358.3"><tspan class="t">CGAffineTransformMakeTranslation</tspan>(<tspan class="n">0</tspan>, <tspan class="n">0</tspan>)</text>
<text x="1368" y="1379.6">})</text>
<text x="1324" y="1400.9"><tspan class="g">springWithDelay</tspan>(<tspan class="n">0.5</tspan>, <tspan class="n">0.10</tspan>, {</text>
<text x="1368" y="1422.2"><tspan class="p">self</tspan>.<tspan class="g">twitterButton</tspan>.<tspan class="t">transform</tspan> =</text>
<text x="1439" y="1443.5"><tspan class="t">CGAffineTransformMakeTranslation</tspan>(<tspan class="n">0</tspan>, <tspan class="n">0</tspan>)</text>
<text x="1368" y="1464.8">})</text>
<text x="1324" y="1486.1"><tspan class="g">springWithDelay</tspan>(<tspan class="n">0.5</tspan>, <tspan class="n">0.15</tspan>, {</text>
<text x="1368" y="1507.4"><tspan class="p">self</tspan>.<tspan class="g">facebookButton</tspan>.<tspan class="t">transform</tspan> =</text>
<text x="1439" y="1528.7"><tspan class="t">CGAffineTransformMakeTranslation</tspan>(<tspan class="n">0</tspan>, <tspan class="n">0</tspan>)</text>
</g>

<!-- INSPECTOR -->
<rect x="1920" y="883" width="2" height="640" fill="#aaa"/>
<text x="1929" y="903" style="font-size:16px;font-weight:bold;fill:#222">View</text>
<text class="i r" x="2042" y="938">Show</text>
<rect x="2051" y="920" width="252" height="25" rx="6" fill="#fff" stroke="#ccc"/>
<text class="f" x="2062" y="938">Frame Rectangle</text>
<path d="M2289 930L2293 925L2297 930M2289 935L2293 940L2297 935" fill="none" stroke="#333" stroke-width="1.5"/>
<g fill="#fff" stroke="#c8c8c8" stroke-width="1.2">
<rect x="2050.5" y="953.5" width="101" height="27"/><rect x="2184" y="953.5" width="102" height="27"/>
<rect x="2050.5" y="1009.5" width="101" height="27"/><rect x="2184" y="1009.5" width="102" height="27"/>
<rect x="2050.5" y="1173.5" width="101" height="26"/><rect x="2184" y="1173.5" width="102" height="26"/>
<rect x="2050.5" y="1227.5" width="101" height="26"/><rect x="2184" y="1227.5" width="102" height="26"/>
</g>
<use href="#sp" x="2155" y="953"/><use href="#sp" x="2289" y="953"/><use href="#sp" x="2155" y="1009"/><use href="#sp" x="2289" y="1009"/>
<use href="#sp" x="2155" y="1173"/><use href="#sp" x="2289" y="1173"/><use href="#sp" x="2155" y="1227"/><use href="#sp" x="2289" y="1227"/>
<text class="f r" x="2146" y="974">140</text><text class="f r" x="2279" y="974">209</text>
<text class="i c" x="2100" y="997">X</text><text class="i c" x="2234" y="997">Y</text>
<text class="f r" x="2146" y="1030">140</text><text class="f r" x="2277" y="1030">61</text>
<text class="i c" x="2100" y="1053">Width</text><text class="i c" x="2234" y="1053">Height</text>
<rect x="1934" y="1067" width="370" height="1.5" fill="#ccc"/>
<text class="i r" x="2042" y="1095">Autoresizing</text>
<rect x="2050" y="1074" width="83" height="83" fill="#fff" stroke="#bbb"/>
<rect x="2072" y="1096" width="40" height="40" fill="#fff" stroke="#777" stroke-width="1.5"/>
<path d="M2091 1078V1093M2087 1078H2095M2087 1093H2095M2053 1116H2069M2053 1112V1120M2069 1112V1120" stroke="#d84030" stroke-width="1.8" fill="none"/>
<g stroke="#eca8a0" stroke-width="1.5" fill="none" stroke-dasharray="3 2"><path d="M2075 1116H2108M2091 1098V1133M2113 1116H2130M2091 1138V1155"/></g>
<path d="M2078 1111L2074 1116L2078 1121M2105 1111L2109 1116L2105 1121M2086 1102L2091 1097L2096 1102M2086 1129L2091 1134L2096 1129" fill="none" stroke="#eca8a0" stroke-width="1.5"/>
<rect x="2137" y="1074" width="167" height="83" fill="#e0e0e0" stroke="#999"/>
<rect x="2153" y="1078" width="135" height="76" fill="url(#sky)" stroke="#333"/>
<path d="M2154 1153L2163 1138L2203 1132L2218 1108L2230 1088L2253 1087L2287 1097V1153Z" fill="#565b68"/>
<path d="M2227 1092L2253 1090L2250 1110L2235 1122L2225 1117Z" fill="#b89070"/>
<path d="M2154 1153L2175 1140L2215 1142L2250 1150L2287 1130V1153Z" fill="#31343e"/>
<rect x="2168" y="1092" width="50" height="35" fill="#fff" stroke="#666"/>
<rect x="2171" y="1096" width="14" height="12" fill="#f02c10"/>
<rect x="1934" y="1164" width="370" height="1.5" fill="#ccc"/>
<text class="i r" x="2042" y="1192">iOS 6/7 Deltas</text>
<text class="f r" x="2146" y="1193">0</text><text class="f r" x="2280" y="1193">0</text>
<text class="i c" x="2100" y="1214">∆X</text><text class="i c" x="2234" y="1214">∆Y</text>
<text class="f r" x="2146" y="1247">0</text><text class="f r" x="2280" y="1247">0</text>
<text class="i c" x="2100" y="1269">∆Width</text><text class="i c" x="2234" y="1269">∆Height</text>
<rect x="1934" y="1282" width="370" height="1.5" fill="#ccc"/>
<text class="i r" x="2042" y="1308">Arrange</text>
<rect x="2051" y="1290" width="252" height="25" rx="6" fill="#fff" stroke="#ccc"/>
<text class="f" x="2062" y="1308">Position View</text>
<path d="M2289 1300L2293 1304L2297 1300" fill="none" stroke="#333" stroke-width="1.5"/>
<rect x="1922" y="1339" width="394" height="1.5" fill="#aaa"/>
<rect x="1922" y="1340.5" width="394" height="24.5" fill="#f0f0f0"/>
<rect x="1922" y="1365" width="394" height="158" fill="#fff"/>
<rect x="1922" y="1365" width="394" height="1.5" fill="#bbb"/>
<rect x="1922" y="1409" width="394" height="1.5" fill="#c0c0c0"/>
<g fill="none" stroke="#bbb" stroke-width="1.5">
<path d="M2041 1378H2052L2058 1384V1397H2041ZM2052 1378V1384H2058"/>
<path d="M2092 1379Q2088 1379 2088 1383V1386L2086 1388L2088 1390V1393Q2088 1397 2092 1397M2098 1379Q2102 1379 2102 1383V1386L2104 1388L2102 1390V1393Q2102 1397 2098 1397"/>
<rect x="2177" y="1380" width="19" height="16"/><path d="M2182 1380V1396M2191 1380V1396" stroke-dasharray="2 2"/>
</g>
<circle cx="2141" cy="1387" r="10" fill="none" stroke="#80aef0" stroke-width="3"/><rect x="2138" y="1384" width="6" height="6" fill="none" stroke="#80aef0" stroke-width="1.5"/>
<path d="M2018 1410V1523M2116 1410V1523M2213 1410V1523M2310 1410V1523M1922 1506H2310" stroke="#c8c8c8" stroke-width="1.5"/>
<circle cx="1969" cy="1455" r="32" fill="#fcc81c" stroke="#e8b820"/>
<rect x="1948" y="1435" width="42" height="40" rx="3" fill="#f8d870" stroke="#d8a820" stroke-width="1.5"/>
<g fill="#fff6d0" stroke="#d8a820"><rect x="1953.5" y="1439.5" width="7" height="7"/><rect x="1965.5" y="1439.5" width="7" height="7"/><rect x="1977.5" y="1439.5" width="7" height="7"/><rect x="1953.5" y="1451.5" width="7" height="7"/><rect x="1965.5" y="1451.5" width="7" height="7"/><rect x="1977.5" y="1451.5" width="7" height="7"/><rect x="1953.5" y="1463.5" width="7" height="7"/><rect x="1965.5" y="1463.5" width="7" height="7"/><rect x="1977.5" y="1463.5" width="7" height="7"/></g>
<circle cx="2066" cy="1455" r="32.5" fill="#fcc81c" stroke="#e8b820"/>
<path d="M2059 1445L2073 1455L2059 1465ZM2048 1449L2041 1455L2048 1461ZM2054 1449L2047 1455L2054 1461ZM2079 1449L2086 1455L2079 1461ZM2085 1449L2092 1455L2085 1461Z" fill="#fff6d8"/>
<text x="2163" y="1467" text-anchor="middle" style="font-size:25px;fill:#000">Label</text>
<text x="2261" y="1467" text-anchor="middle" style="font-size:23.5px;fill:#1a6ed8">Button</text>
</g>
<rect x="283" y="792" width="1.5" height="731" fill="#000"/>
</svg>
</body></html>
